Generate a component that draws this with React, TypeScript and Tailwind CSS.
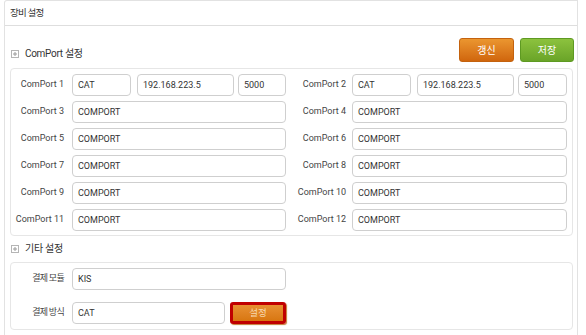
import React from 'react';

const FONT = { fontFamily: "Roboto, 'Noto Sans CJK KR', sans-serif" };

const Field: React.FC<{ value: string; className?: string }> = ({ value, className = '' }) => (
  <div className={`h-[22px] border border-[#cfcfcf] rounded-[4px] bg-white px-[5px] flex items-center text-[9px] leading-none text-[#333] ${className}`}>
    {value}
  </div>
);

const PlusBox = () => (
  <svg width="8" height="8" viewBox="0 0 8 8" className="shrink-0">
    <rect x="0.5" y="0.5" width="7" height="7" fill="white" stroke="#b5b5b5" />
    <path d="M4 2v4M2 4h4" stroke="#9a9a9a" strokeWidth="1" />
  </svg>
);

const SectionTitle: React.FC<{ title: string }> = ({ title }) => (
  <div className="flex items-center gap-[6px] pl-[6px]">
    <PlusBox />
    <span className="text-[10px] tracking-[-0.3px] leading-none text-[#333]">{title}</span>
  </div>
);

const ports = [1, 2, 3, 4, 5, 6, 7, 8, 9, 10, 11, 12];

export default function App() {
  const rows = [];
  for (let i = 0; i < ports.length; i += 2) rows.push([ports[i], ports[i + 1]]);

  return (
    <div className="w-[586px] h-[335px] bg-white overflow-hidden" style={FONT}>
      <div className="ml-[4px] w-[574px] h-[340px] border-l border-t border-r border-[#e2e2e2] rounded-tl-[3px]">
        <div className="h-[25px] border-b border-[#dedede] flex items-center pl-[5px] text-[9.5px] tracking-[-0.8px] text-[#333]">
          장비 설정
        </div>

        <div className="flex items-end justify-between pt-[12px] pr-[3px]">
          <div className="pb-[3px]">
            <SectionTitle title="ComPort 설정" />
          </div>
          <div className="flex gap-[6px]">
            <button className="w-[55px] h-[24px] rounded-[3px] border border-[#c4620e] bg-gradient-to-b from-[#eb962f] to-[#d0660c] text-white text-[10px]">
              갱신
            </button>
            <button className="w-[54px] h-[24px] rounded-[3px] border border-[#5e9a22] bg-gradient-to-b from-[#8cc23e] to-[#6aa428] text-white text-[10px]">
              저장
            </button>
          </div>
        </div>

        <div className="ml-[5px] mt-[6px] w-[563px] border border-[#e6e6e6] rounded-[4px] pt-[5px] pb-[4px] flex flex-col gap-[5px]">
          {rows.map(([a, b]) => (
            <div key={a} className="grid grid-cols-[279px_1fr]">
              {[a, b].map((n, idx) => (
                <div key={n} className={`flex items-center ${idx === 0 ? 'pr-[4px]' : 'pr-[5px]'}`}>
                  <span className={`${idx === 0 ? 'w-[53px] mr-[8px]' : 'w-[56px] mr-[6px]'} text-right text-[9px] text-[#444] whitespace-nowrap`}>
                    ComPort {n}
                  </span>
                  {n <= 2 ? (
                    <div className="flex flex-1">
                      <Field value="CAT" className="w-[59px]" />
                      <Field value="192.168.223.5" className="w-[97px] ml-[6px]" />
                      <Field value="5000" className="flex-1 ml-[4px]" />
                    </div>
                  ) : (
                    <Field value="COMPORT" className="flex-1" />
                  )}
                </div>
              ))}
            </div>
          ))}
        </div>

        <div className="h-[26px] flex items-center">
          <SectionTitle title="기타 설정" />
        </div>

        <div className="ml-[5px] w-[563px] border border-[#e6e6e6] rounded-[4px] pt-[5px] pb-[5px] flex flex-col gap-[12px]">
          <div className="flex items-center">
            <span className="w-[53px] mr-[8px] text-right text-[9px] tracking-[-0.7px] text-[#444] whitespace-nowrap">결제 모듈</span>
            <Field value="KIS" className="w-[214px] h-[21px]" />
          </div>
          <div className="flex items-center">
            <span className="w-[53px] mr-[8px] text-right text-[9px] tracking-[-0.7px] text-[#444] whitespace-nowrap">결제 방식</span>
            <Field value="CAT" className="w-[153px] h-[21px]" />
            <button className="ml-[5px] w-[56px] h-[22px] rounded-[3px] border-[3px] border-[#c00000] bg-gradient-to-b from-[#e89030] to-[#d8760f] text-[#f7d9b0] text-[9.5px] leading-none shadow-[1px_1px_1px_rgba(180,90,0,0.8)] flex items-center justify-center">
              설정
            </button>
          </div>
        </div>
      </div>
    </div>
  );
}
